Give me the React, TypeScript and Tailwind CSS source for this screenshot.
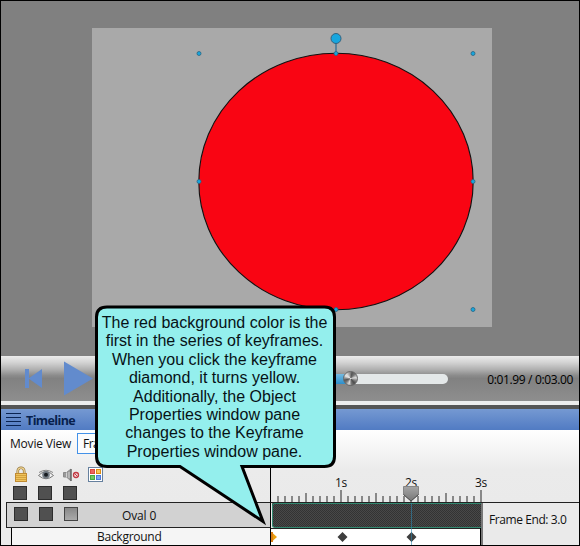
import React from "react";

const HANDLES = [
  [198.5, 53], [335.5, 53], [472.5, 53], [198.5, 181], [472.5, 181], [198.5, 309], [335.5, 309], [472.5, 309],
];

const CALLOUT_LINES = [
  "The red background color is the",
  "first in the series of keyframes.",
  "When you click the keyframe",
  "diamond, it turns yellow.",
  "Additionally, the Object",
  "Properties window pane",
  "changes to the Keyframe",
  "Properties window pane.",
];

function Stage() {
  return (
    <section className="relative h-[355px] bg-[#808080] pl-[91px] pt-[27px]">
      <div className="h-[299px] w-[400px] bg-[#a9a9a9]" />
      <svg className="absolute -left-px -top-px" width="579" height="356">
        <ellipse cx="336" cy="181.5" rx="137.2" ry="128.3" fill="#f90513" stroke="#111" strokeWidth="1.1" />
        <path d="M336 42V53" stroke="#527f9b" strokeWidth="1.8" />
        <circle cx="336" cy="38.5" r="5" fill="#17a6de" stroke="#34627e" strokeWidth="1" />
        {HANDLES.map(([x, y]) => (
          <circle key={`${x}-${y}`} cx={x + 0.5} cy={y + 0.5} r="2" fill="#17a6de" stroke="#2a6480" strokeWidth="0.8" />
        ))}
      </svg>
    </section>
  );
}

function Player() {
  return (
    <section>
      <div className="flex h-[45px] items-center bg-[linear-gradient(to_bottom,#ececec_0%,#d2d2d2_15%,#b0b0b0_30%,#8c8c8c_43%,#818181_50%,#8e8e8e_100%)]">
        <svg className="ml-[23px] mb-[2px] shrink-0" width="70" height="36" fill="#628bcd">
          <path d="M1 9h4v19H1z" />
          <path d="M18 9v19L4.500 18.500z" />
          <path d="M40 1.500V35.500L69 18.500z" />
        </svg>
        <div className="ml-[216px] flex h-[10px] w-[138px] overflow-visible rounded-full bg-[#e4e8e9]">
          <div className="h-full w-[41px] rounded-l-full bg-[linear-gradient(#74bae0,#2d8fcb)]" />
          <div className="-ml-[8px] -mt-[3px] size-[15px] shrink-0 rounded-full border border-[#666] bg-[conic-gradient(from_-10deg,#999,#555_25deg,#777_55deg,#ddd_90deg,#888_120deg,#4c4c4c_150deg,#777_180deg,#ddd_205deg,#777_240deg,#555_265deg,#ddd_305deg,#ddd_325deg,#999)]" />
        </div>
        <span className="ml-auto mr-[6px] whitespace-nowrap pt-[2px] font-['Open_Sans',sans-serif] text-[12px] tracking-[-0.36px] text-black">0:01.99 / 0:03.00</span>
      </div>
      <div className="h-[4px] bg-[#ededed]" />
      <div className="h-[4px] bg-[#555]" />
    </section>
  );
}

function ColumnIcons() {
  return (
    <svg width="100" height="18" viewBox="0 0 100 18" className="ml-[9px] shrink-0">
      <path d="M7.800 9V5a3.200 3.200 0 0 1 6.400 0v4" fill="none" stroke="#94753b" strokeWidth="2.600" />
      <path d="M7.800 9V5a3.200 3.200 0 0 1 6.400 0v4" fill="none" stroke="#f2d896" strokeWidth="1.200" />
      <rect x="5.500" y="7.500" width="11" height="8" fill="#efc35c" stroke="#c08a32" />
      <path d="M6 9.500h10M6 11.500h10M6 13.500h10" stroke="#c9922d" strokeWidth="0.7" />
      <path d="M28.500 9.500Q36 1.500 43.500 9.500Q36 16 28.500 9.500z" fill="#f1f1f1" stroke="#777" />
      <path d="M29 6.500Q36 2 43 6.500" stroke="#888" fill="none" />
      <circle cx="36" cy="8.800" r="3.800" fill="#727a82" />
      <circle cx="36" cy="8.800" r="2" fill="#171b20" />
      <path d="M53.500 6.500h3l4.500-3.500v12l-4.500-4h-3z" fill="#999" stroke="#8a8a8a" />
      <path d="M56.500 6.500v4.500M59 6v6" stroke="#d2d2d2" />
      <path d="M61 3v12" stroke="#555" />
      <circle cx="66" cy="9" r="2.500" fill="#f4dddd" stroke="#c23a45" strokeWidth="1.300" />
      <path d="M64.300 7.300l3.400 3.400" stroke="#c23a45" />
      <rect x="78.500" y="1.500" width="14" height="14" fill="#fff" stroke="#66809e" />
      <rect x="80.500" y="3.500" width="4" height="4" fill="#ed655e" stroke="#da4941" />
      <rect x="86.500" y="3.500" width="4" height="4" fill="#f7c75a" stroke="#dd8a10" />
      <rect x="80.500" y="9.500" width="4" height="4" fill="#71cb62" stroke="#49a844" />
      <rect x="86.500" y="9.500" width="4" height="4" fill="#7aa7f0" stroke="#4e79da" />
    </svg>
  );
}

function Box({ light = false }: { light?: boolean }) {
  return <i className={`block size-[14px] border ${light ? "border-[#444] bg-[linear-gradient(#888,#aaa)]" : "border-[#2d2d2d] bg-[#505050]"}`} />;
}

function Ruler() {
  return (
    <svg width="308" height="30" className="mt-auto shrink-0">
      {Array.from({ length: 30 }, (_, i) => {
        const n = i + 1;
        const h = n % 10 === 0 ? 12 : n % 5 === 0 ? 9 : 6;
        return <rect key={n} x={n * 7 - 1} y={30 - h} width="2" height={h} fill="#888" />;
      })}
      {["1s", "2s", "3s"].map((label, i) => (
        <text key={label} x={70 + i * 70} y="15" textAnchor="middle" fontSize="12" letterSpacing="-0.4" fontFamily="Open Sans, sans-serif" fill="#111">{label}</text>
      ))}
      <defs>
        <linearGradient id="marker" x2="0" y2="1">
          <stop stopColor="#a5a5a5" />
          <stop offset="1" stopColor="#777" />
        </linearGradient>
      </defs>
      <path d="M132.500 14.500h15v8l-7.500 6.500-7.500-6.500z" fill="url(#marker)" stroke="#858585" />
      <path d="M132.500 22.500L140 29l7.500-6.500" fill="none" stroke="#4c4c4c" />
    </svg>
  );
}

function Timeline() {
  return (
    <section className="font-['Open_Sans',sans-serif] text-[12px] text-[#111]">
      <header className="flex h-[21px] items-center bg-[linear-gradient(#7599d2,#517bc3)]">
        <svg width="16" height="14" className="ml-[5px]" stroke="#0a2452">
          <path d="M0 .5h15M0 4.500h15M0 8.500h15M0 12.500h15" />
        </svg>
        <h1 className="ml-[4px] mt-[3px] text-[12.5px] font-bold leading-none tracking-[-0.6px] text-[#071f4d]">Timeline</h1>
      </header>
      <div className="flex h-[72px] bg-[linear-gradient(#fff,#ebebeb_55%,#eaeaea)]">
        <div className="flex w-[269px] shrink-0 flex-col">
          <nav className="flex h-[36px] pt-[3px]">
            <span className="ml-[9px] w-[67px] whitespace-nowrap pt-[2px] leading-[18px] tracking-[-0.2px]">Movie View</span>
            <span className="h-[21px] w-[85px] border border-[#4492e8] bg-[#fcfcfc] pl-[5px] leading-[20px] tracking-[-0.5px]">Fra</span>
          </nav>
          <ColumnIcons />
          <div className="ml-[12px] mt-[2px] flex gap-[11px]"><Box /><Box /><Box /></div>
        </div>
        <div className="flex w-[309px] border-l border-black"><Ruler /></div>
      </div>
      <div className="flex h-[26px]">
        <div className="ml-[5px] flex w-[264px] shrink-0 items-start border-y border-l border-[#222] bg-[#d2d2d2]">
          <div className="ml-[7px] mt-[4px] flex gap-[11px]"><Box /><Box /><Box light /></div>
          <span className="ml-[44px] pt-[3px] leading-[20px] tracking-[-0.15px]">Oval 0</span>
        </div>
        <div className="flex w-[309px] border-l border-t border-l-black border-t-[#222] bg-[#eaeaea]">
          <div className="relative ml-px w-[209px] shrink-0 rounded-l-[3px] border-b border-l border-t border-[#328870] bg-[#393939] bg-[repeating-conic-gradient(#333_0_25%,#484848_0_50%)] bg-[length:2px_2px] shadow-[0_-1px_0_#222]">
            <i className="absolute -bottom-[18px] -top-px left-[138px] z-10 w-px bg-[#2f86ad99]" />
          </div>
          <div className="w-[2px] bg-[#777]" />
          <span className="whitespace-nowrap pl-[6px] pt-[7px] leading-[20px] tracking-[-0.42px]">Frame End: 3.0</span>
        </div>
      </div>
      <div className="flex h-[17px]">
        <div className="ml-[10px] w-[259px] shrink-0 border-l border-black bg-[#f5f5f5] pl-[85px] leading-[18px] tracking-[-0.27px]">Background</div>
        <div className="flex w-[309px] border-l border-black bg-[#eaeaea]">
          <svg width="210" height="17" className="shrink-0 border-r border-black bg-white">
            <path d="M0 .5h210" stroke="#222" />
            <path d="M1 4.500l5 4.500-5 4.500z" fill="#eba00c" />
            <path d="M1 4v10" stroke="#d97d16" strokeWidth="2" />
            <path d="M71.500 4l5 5-5 5-5-5zM140.500 4l5 5-5 5-5-5z" fill="#3e3e3e" />
          </svg>
          <i className="w-[2px] bg-[#777]" />
        </div>
      </div>
    </section>
  );
}

function Callout() {
  return (
    <aside className="absolute left-[94px] top-[304px] z-20 h-[222px] w-[244px]">
      <svg className="absolute inset-0" width="244" height="222">
        <path d="M13 3H230.500Q240.500 3 240.500 13V152.500Q240.500 162.500 230.500 162.500H148L169 217.500L86 162.500H13Q2.500 162.500 2.500 152.500V13Q2.500 3 13 3Z" fill="#94efed" stroke="#000" strokeWidth="3" />
      </svg>
      <p className="relative -ml-[3px] pt-[10px] text-center font-['Liberation_Sans',Arial,sans-serif] text-[16px] leading-[18.4px] tracking-[0.02px] text-[#071216]">
        {CALLOUT_LINES.map((text) => <span key={text} className="block whitespace-nowrap">{text}</span>)}
      </p>
    </aside>
  );
}

export default function App() {
  return (
    <main className="relative h-[546px] w-[580px] overflow-hidden border border-black bg-[#eaeaea]">
      <Stage />
      <Player />
      <Timeline />
      <div className="absolute -left-px -top-px"><Callout /></div>
    </main>
  );
}
